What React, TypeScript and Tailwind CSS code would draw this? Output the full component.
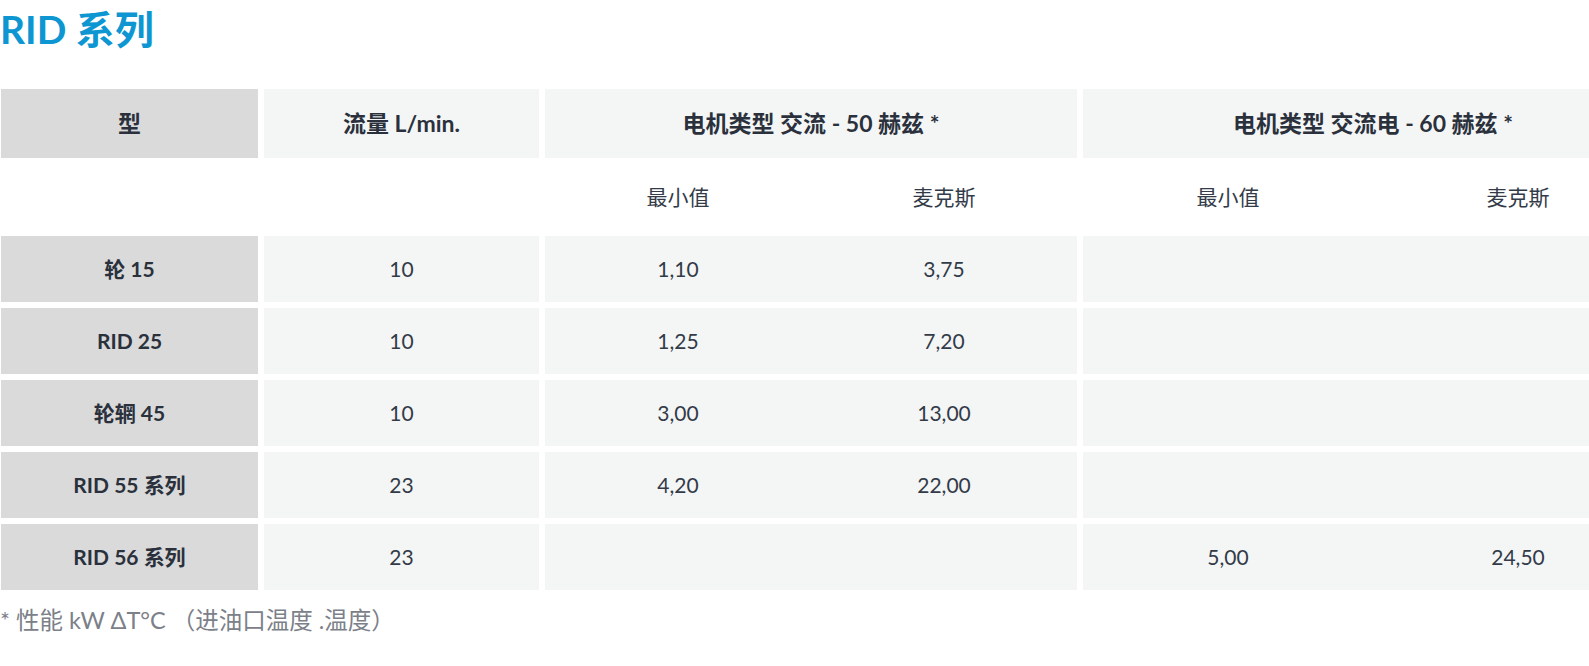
import React from "react";

const FONT = "font-['Lato','Noto_Sans_CJK_SC',sans-serif]";

type Row = {
  name: string;
  flow: string;
  a: [string, string];
  b: [string, string];
};

const rows: Row[] = [
  { name: "轮 15", flow: "10", a: ["1,10", "3,75"], b: ["", ""] },
  { name: "RID 25", flow: "10", a: ["1,25", "7,20"], b: ["", ""] },
  { name: "轮辋 45", flow: "10", a: ["3,00", "13,00"], b: ["", ""] },
  { name: "RID 55 系列", flow: "23", a: ["4,20", "22,00"], b: ["", ""] },
  { name: "RID 56 系列", flow: "23", a: ["", ""], b: ["5,00", "24,50"] },
];

function Pair({ v, bg }: { v: [string, string]; bg: string }) {
  return (
    <div className={`grid grid-cols-2 h-full ${bg}`}>
      <div className="flex items-center justify-center">{v[0]}</div>
      <div className="flex items-center justify-center">{v[1]}</div>
    </div>
  );
}

export default function App() {
  return (
    <div className={`w-full overflow-hidden bg-white ${FONT} text-[#333b48]`}>
      <h2 className="pt-[5px] h-[53px] text-[39px] leading-[48px] font-bold text-[#0d96d1]">
        RID 系列
      </h2>
      <div className="mt-[36px] ml-[1px] grid grid-cols-[257px_275px_532px_580px] gap-[6px] w-[1662px] text-[21px]">
        {/* header */}
        <div className="h-[69px] bg-[#dadada] flex items-center justify-center font-bold text-[23px] text-[#2b313c]">
          型
        </div>
        <div className="h-[69px] bg-[#f4f6f6] flex items-center justify-center font-bold text-[23px] text-[#2b313c]">
          流量 L/min.
        </div>
        <div className="h-[69px] bg-[#f4f6f6] flex items-center justify-center font-bold text-[23px] text-[#2b313c]">
          电机类型 交流 - 50 赫兹 *
        </div>
        <div className="h-[69px] bg-[#f4f6f6] flex items-center justify-center font-bold text-[23px] text-[#2b313c]">
          电机类型 交流电 - 60 赫兹 *
        </div>

        {/* sub header */}
        <div className="h-[66px]" />
        <div className="h-[66px]" />
        <div className="h-[66px]">
          <Pair v={["最小值", "麦克斯"]} bg="" />
        </div>
        <div className="h-[66px]">
          <Pair v={["最小值", "麦克斯"]} bg="" />
        </div>

        {rows.map((r) => (
          <React.Fragment key={r.name}>
            <div className="h-[66px] bg-[#dadada] flex items-center justify-center font-bold text-[#2b313c]">
              {r.name}
            </div>
            <div className="h-[66px] bg-[#f4f6f6] flex items-center justify-center">
              {r.flow}
            </div>
            <div className="h-[66px]">
              <Pair v={r.a} bg="bg-[#f4f6f6]" />
            </div>
            <div className="h-[66px]">
              <Pair v={r.b} bg="bg-[#f4f6f6]" />
            </div>
          </React.Fragment>
        ))}
      </div>
      <p className="mt-[14px] text-[23.5px] leading-[32px] text-[#7b8089]">
        * 性能 kW ΔT°C （进油口温度 .温度）
      </p>
    </div>
  );
}
